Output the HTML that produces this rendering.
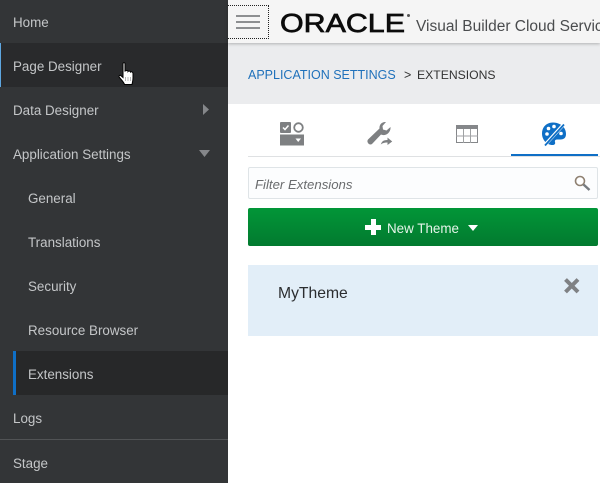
<!DOCTYPE html>
<html><head><meta charset="utf-8"><style>
html,body{margin:0;padding:0}
body{width:600px;height:483px;overflow:hidden;position:relative;background:#fff;font-family:"Liberation Sans",sans-serif}
div,span,svg{position:absolute;box-sizing:border-box}
.n{left:0;width:228px;height:44px;line-height:46px;color:#c4c6c8;font-size:13.400px;white-space:nowrap}
.t{white-space:nowrap}
</style></head><body>
<div style="left:0;top:0;width:228px;height:483px;background:#333537"></div>
<div style="left:0;top:43px;width:228px;height:44px;background:#292a2c;border-left:1px solid #5ea6e0"></div>
<div style="left:13px;top:351px;width:215px;height:44px;background:#272829;border-left:3px solid #0f6fc6"></div>
<div style="left:0;top:439px;width:228px;height:1px;background:#515355"></div>
<div class="n" style="top:0;padding-left:13px">Home</div>
<div class="n" style="top:44px;padding-left:13px">Page Designer</div>
<div class="n" style="top:88px;padding-left:13px">Data Designer</div>
<div class="n" style="top:132px;padding-left:13px">Application Settings</div>
<div class="n" style="top:176px;padding-left:28px">General</div>
<div class="n" style="top:220px;padding-left:28px">Translations</div>
<div class="n" style="top:264px;padding-left:28px">Security</div>
<div class="n" style="top:308px;padding-left:28px">Resource Browser</div>
<div class="n" style="top:352px;padding-left:28px">Extensions</div>
<div class="n" style="top:396px;padding-left:13px">Logs</div>
<div class="n" style="top:441px;padding-left:13px">Stage</div>
<svg style="left:200px;top:103px" width="12" height="14"><path d="M3 1L9 6.500L3 12Z" fill="#85878a"/></svg>
<svg style="left:198px;top:148px" width="14" height="12"><path d="M1 2H12L6.500 9Z" fill="#85878a"/></svg>
<svg style="left:118px;top:62px" width="18" height="24" viewBox="0 0 18 24"><path d="M5 1.500C5 .5 7 .5 7 1.500V9L8.500 8.500C9.500 8.300 10 9 10 9.500C10.500 8.800 12.500 9 12.500 10C13.200 9.400 15 10 15 11.500V16C15 18.500 14.500 20 14 22.500H6.500C6 20.500 4 18.500 1.500 15.500C.3 14 1.700 12.700 3 13.700L5 15.500Z" fill="#fff" stroke="#000" stroke-width="1"/><path d="M7.500 15v4M10 15v4M12.500 15v4" stroke="#999" stroke-width=".7"/></svg>

<div style="left:228px;top:0;width:372px;height:104px;background:#ebecee"></div>
<div style="left:228px;top:0;width:372px;height:43px;background:#f5f5f5;box-shadow:0 1px 3px rgba(0,0,0,.25)"></div>
<div style="left:228px;top:5px;width:41px;height:34px;border:1px dotted #222;border-left:none"></div>
<div style="left:236px;top:15px;width:24px;height:2px;background:#8d8f91"></div>
<div style="left:236px;top:21px;width:24px;height:2px;background:#8d8f91"></div>
<div style="left:236px;top:27px;width:24px;height:2px;background:#8d8f91"></div>
<svg style="left:278px;top:8px" width="140" height="30"><text x="2" y="24" font-family="Liberation Sans" font-weight="400" font-size="25.500" fill="#0c0c0c" stroke="#0c0c0c" stroke-width=".7" textLength="125" lengthAdjust="spacingAndGlyphs">ORACLE</text><circle cx="130.500" cy="7.500" r="1.500" fill="#555"/></svg>
<div class="t" style="left:416px;top:17px;font-size:15.500px;line-height:20px;color:#4a4c4e">Visual Builder Cloud Service</div>
<div class="t" style="left:248px;top:67px;font-size:12.500px;line-height:16px;color:#1f71bb">APPLICATION SETTINGS</div>
<div class="t" style="left:404px;top:67px;font-size:12.500px;line-height:16px;color:#333">&gt;</div>
<div class="t" style="left:417px;top:67px;font-size:12.200px;line-height:16px;color:#333">EXTENSIONS</div>

<div style="left:248px;top:156px;width:352px;height:1px;background:#dfe1e3"></div>
<div style="left:511px;top:154px;width:87px;height:2px;background:#0f6fc6"></div>
<svg style="left:280px;top:122px" width="24" height="24" viewBox="0 0 24 24"><rect width="11" height="11" y="0" rx="1" fill="#7e8082"/><path d="M3 5.500L5 7.500L8.500 3.500" fill="none" stroke="#fff" stroke-width="1.500"/><circle cx="18.500" cy="5.500" r="4.300" fill="none" stroke="#7e8082" stroke-width="1.800"/><rect y="12.500" width="24" height="11" fill="#7e8082"/><path d="M15.500 16.500H21L18.200 20Z" fill="#fff"/></svg>
<svg style="left:366px;top:121px" width="27" height="26" viewBox="0 0 27 26"><path d="M20 1C16 .5 13 3.500 13.500 7.500L2 18.500C0 21 3.500 25 6 23L15 13.500C19 15.500 25 12 24.500 6L20.500 9.500L17 8.500L16.500 5Z" fill="#7e8082"/><path d="M14 25C14.500 20 17.500 18.500 21 18.500V15.500L27 20.500L21 25V22C18 22 15.500 23 14 25Z" fill="#7e8082" stroke="#fff" stroke-width="1"/></svg>
<svg style="left:456px;top:125px" width="23" height="19" viewBox="0 0 23 19"><rect x=".5" y=".5" width="21" height="17" fill="#fff" stroke="#85878a"/><rect width="22" height="4" fill="#85878a"/><path d="M7.500 4v14M14.500 4v14M0 11h22" stroke="#a0a2a4" fill="none"/></svg>
<svg style="left:541px;top:121px" width="27" height="26" viewBox="0 0 27 26"><path d="M12 1.500C5.500 1.500 1 6 1 12.500C1 19 6 24 11.500 24C14 24 14.500 22.500 14 21C13.500 19.500 14.500 18.500 16 18.500C19 18.500 25 19.500 25 13C25 6 19 1.500 12 1.500Z" fill="#0f6fc6"/><circle cx="6" cy="13" r="1.800" fill="#fff"/><circle cx="7.500" cy="7.500" r="1.800" fill="#fff"/><circle cx="13" cy="5.500" r="1.800" fill="#fff"/><circle cx="20" cy="12.500" r="1.800" fill="#fff"/><path d="M3 25L23 3" stroke="#fff" stroke-width="3.400"/><path d="M4 24.500L23 3.500" stroke="#0f6fc6" stroke-width="1.800"/></svg>

<div style="left:248px;top:167px;width:350px;height:32px;background:#fcfdfe;border:1px solid #dfe4e7;border-radius:2px"></div>
<div class="t" style="left:255px;top:177px;font-size:13.200px;line-height:16px;font-style:italic;color:#6a6c6e">Filter Extensions</div>
<svg style="left:573px;top:174px" width="19" height="18" viewBox="0 0 19 18"><circle cx="7" cy="7" r="4.500" fill="#fff" stroke="#8f8172" stroke-width="1.600"/><path d="M10.500 10.500L16.500 16" stroke="#777b80" stroke-width="2.400"/></svg>

<div style="left:248px;top:208px;width:350px;height:38px;border-radius:2px;background:linear-gradient(#029638,#027a2f)"></div>
<div style="left:365px;top:225px;width:16px;height:5px;background:#fff"></div>
<div style="left:371px;top:219px;width:5px;height:16px;background:#fff"></div>
<div class="t" style="left:387px;top:221px;font-size:13.400px;line-height:16px;color:#e6f5ea">New Theme</div>
<svg style="left:467px;top:224px" width="12" height="8"><path d="M1 1H11L6 7Z" fill="#fff"/></svg>

<div style="left:248px;top:265px;width:350px;height:71px;background:#e2eef8"></div>
<div class="t" style="left:278px;top:285px;font-size:15.700px;line-height:18px;color:#2b2d30">MyTheme</div>
<svg style="left:563px;top:277px" width="18" height="18"><path d="M2.500 2.500L15 15M15 2.500L2.500 15" stroke="#7f8184" stroke-width="4"/></svg>
</body></html>
